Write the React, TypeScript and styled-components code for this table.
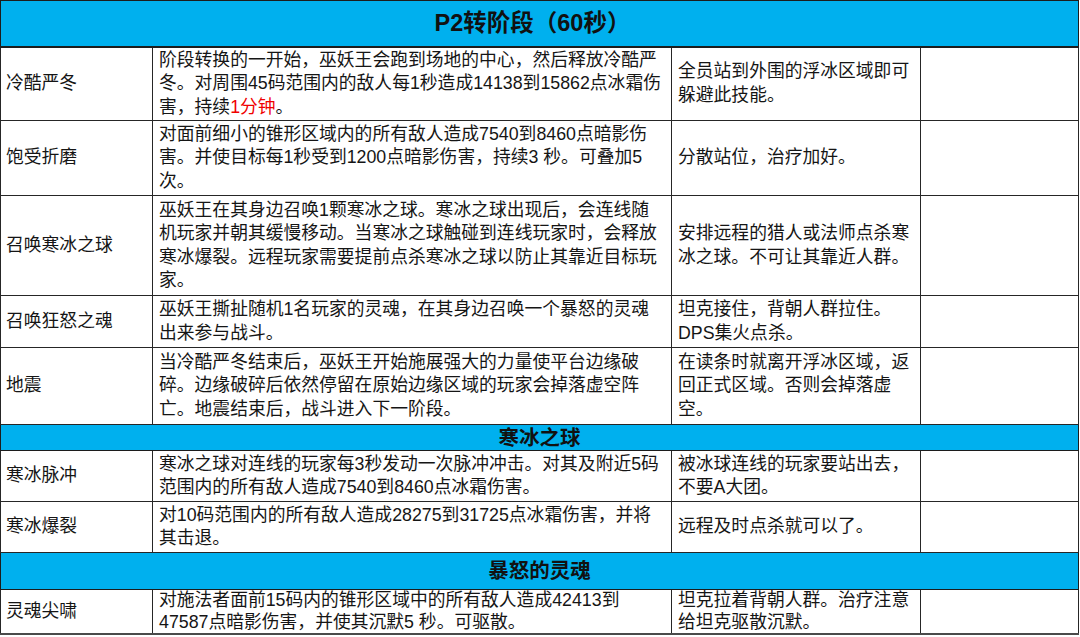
import React from "react";
import styled, { createGlobalStyle } from "styled-components";

const GlobalStyle = createGlobalStyle`
  html, body {
    margin: 0;
    padding: 0;
    background: #fff;
  }
  body {
    font-family: "Liberation Sans", "Noto Sans CJK SC", sans-serif;
    color: #151515;
  }
`;

const Sheet = styled.div`
  width: 1080px;
  height: 637px;
  overflow: hidden;
`;

const Table = styled.table`
  width: 1079px;
  border-collapse: collapse;
  table-layout: fixed;
  border: 1px solid #1c1c1c;
  border-bottom: 2px solid #4a4a4a;
`;

const Tr = styled.tr<{ $h: number; $tight?: boolean }>`
  height: ${(p) => p.$h}px;

  td {
    line-height: ${(p) => (p.$tight ? "21.5px" : "23.5px")};
  }
`;

const Cell = styled.td`
  border: 1px solid #262626;
  padding: 0 6px;
  vertical-align: middle;
  font-size: 17.8px;
  color: #151515;
  background: #fff;
  text-spacing-trim: space-all;
`;

const NameCell = styled(Cell)`
  padding-left: 5px;
`;

const TitleCell = styled.td<{ $big?: boolean }>`
  background: #00b0ee;
  border: 1px solid #1c1c1c;
  border-bottom-width: ${(p) => (p.$big ? 2 : 1)}px;
  text-align: center;
  vertical-align: middle;
  font-weight: bold;
  font-size: ${(p) => (p.$big ? 23.5 : 20.5)}px;
  color: #111;
  padding: 0 ${(p) => (p.$big ? 14 : 0)}px 0 0;
`;

const Line = styled.span`
  display: block;
  white-space: nowrap;
`;

const Red = styled.span`
  color: #f00000;
`;

type Row =
  | { kind: "title"; text: string; h: number; big?: boolean }
  | {
      kind: "skill";
      name: string;
      desc: React.ReactNode[];
      tip: string[];
      h: number;
      tight?: boolean;
    };

const rows: Row[] = [
  { kind: "title", text: "P2转阶段（60秒）", h: 46, big: true },
  {
    kind: "skill",
    name: "冷酷严冬",
    h: 74,
    desc: [
      "阶段转换的一开始，巫妖王会跑到场地的中心，然后释放冷酷严",
      "冬。对周围45码范围内的敌人每1秒造成14138到15862点冰霜伤",
      <>
        害，持续<Red>1分钟</Red>。
      </>,
    ],
    tip: ["全员站到外围的浮冰区域即可", "躲避此技能。"],
  },
  {
    kind: "skill",
    name: "饱受折磨",
    h: 75,
    desc: [
      "对面前细小的锥形区域内的所有敌人造成7540到8460点暗影伤",
      "害。并使目标每1秒受到1200点暗影伤害，持续3 秒。可叠加5",
      "次。",
    ],
    tip: ["分散站位，治疗加好。"],
  },
  {
    kind: "skill",
    name: "召唤寒冰之球",
    h: 100,
    desc: [
      "巫妖王在其身边召唤1颗寒冰之球。寒冰之球出现后，会连线随",
      "机玩家并朝其缓慢移动。当寒冰之球触碰到连线玩家时，会释放",
      "寒冰爆裂。远程玩家需要提前点杀寒冰之球以防止其靠近目标玩",
      "家。",
    ],
    tip: ["安排远程的猎人或法师点杀寒", "冰之球。不可让其靠近人群。"],
  },
  {
    kind: "skill",
    name: "召唤狂怒之魂",
    h: 52,
    desc: ["巫妖王撕扯随机1名玩家的灵魂，在其身边召唤一个暴怒的灵魂", "出来参与战斗。"],
    tip: ["坦克接住，背朝人群拉住。", "DPS集火点杀。"],
  },
  {
    kind: "skill",
    name: "地震",
    h: 77,
    desc: [
      "当冷酷严冬结束后，巫妖王开始施展强大的力量使平台边缘破",
      "碎。边缘破碎后依然停留在原始边缘区域的玩家会掉落虚空阵",
      "亡。地震结束后，战斗进入下一阶段。",
    ],
    tip: ["在读条时就离开浮冰区域，返", "回正式区域。否则会掉落虚", "空。"],
  },
  { kind: "title", text: "寒冰之球", h: 26 },
  {
    kind: "skill",
    name: "寒冰脉冲",
    h: 51,
    desc: ["寒冰之球对连线的玩家每3秒发动一次脉冲冲击。对其及附近5码", "范围内的所有敌人造成7540到8460点冰霜伤害。"],
    tip: ["被冰球连线的玩家要站出去，", "不要A大团。"],
  },
  {
    kind: "skill",
    name: "寒冰爆裂",
    h: 51,
    desc: ["对10码范围内的所有敌人造成28275到31725点冰霜伤害，并将", "其击退。"],
    tip: ["远程及时点杀就可以了。"],
  },
  { kind: "title", text: "暴怒的灵魂", h: 37 },
  {
    kind: "skill",
    name: "灵魂尖啸",
    h: 44,
    tight: true,
    desc: ["对施法者面前15码内的锥形区域中的所有敌人造成42413到", "47587点暗影伤害，并使其沉默5 秒。可驱散。"],
    tip: ["坦克拉着背朝人群。治疗注意", "给坦克驱散沉默。"],
  },
];

export default function App() {
  return (
    <>
      <GlobalStyle />
      <Sheet>
        <Table>
          <colgroup>
            <col style={{ width: 152 }} />
            <col style={{ width: 519 }} />
            <col style={{ width: 249 }} />
            <col />
          </colgroup>
          <tbody>
            {rows.map((r, i) =>
              r.kind === "title" ? (
                <Tr key={i} $h={r.h}>
                  <TitleCell colSpan={4} $big={r.big}>
                    {r.text}
                  </TitleCell>
                </Tr>
              ) : (
                <Tr key={i} $h={r.h} $tight={r.tight}>
                  <NameCell>{r.name}</NameCell>
                  <Cell>
                    {r.desc.map((l, j) => (
                      <Line key={j}>{l}</Line>
                    ))}
                  </Cell>
                  <Cell>
                    {r.tip.map((l, j) => (
                      <Line key={j}>{l}</Line>
                    ))}
                  </Cell>
                  <Cell />
                </Tr>
              )
            )}
          </tbody>
        </Table>
      </Sheet>
    </>
  );
}
